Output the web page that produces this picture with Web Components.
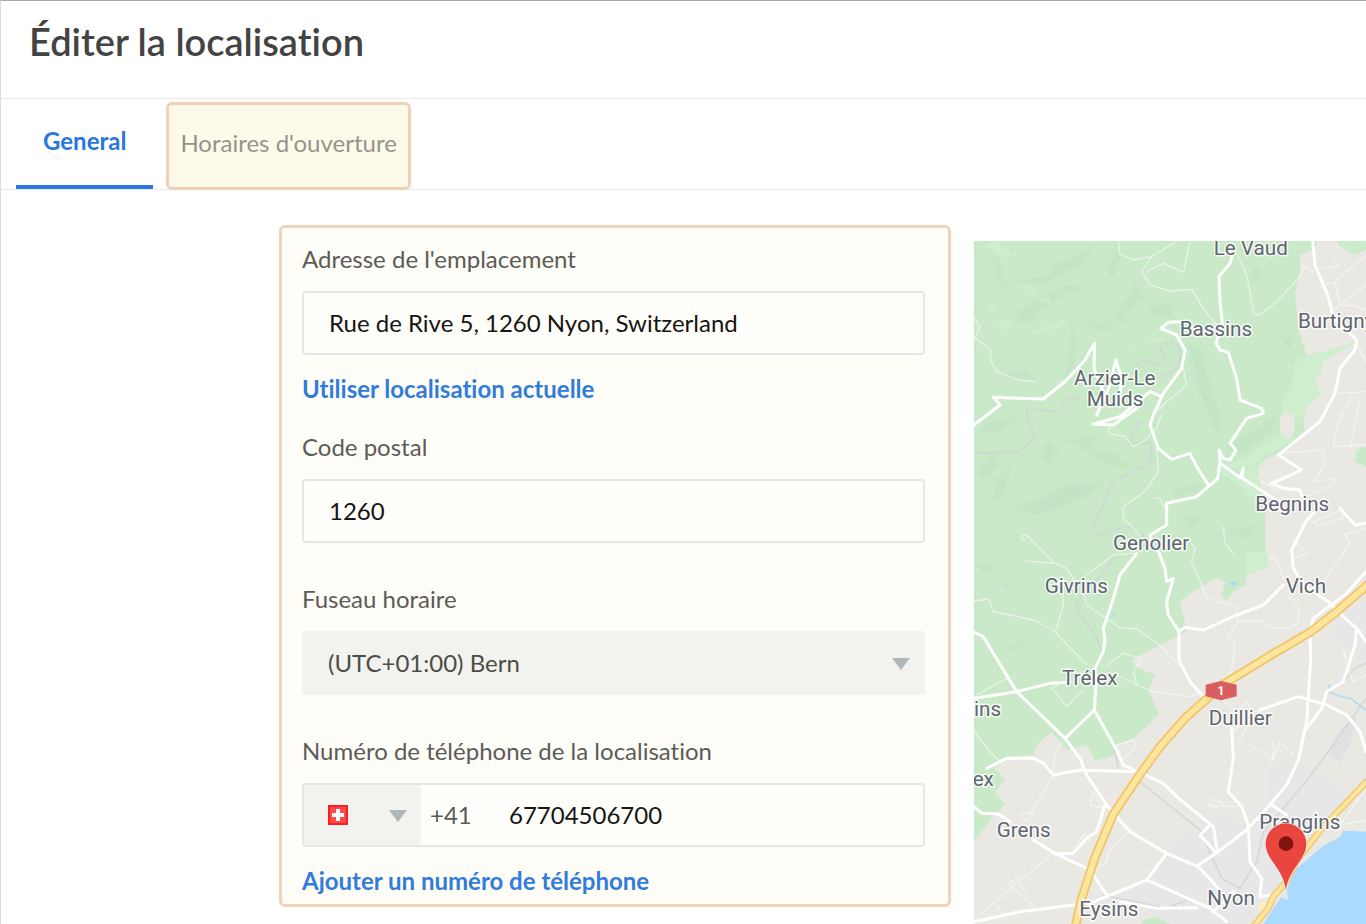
<!DOCTYPE html>
<html lang="fr">
<head>
<meta charset="utf-8">
<meta name="viewport" content="width=device-width, initial-scale=1">
<title>Éditer la localisation</title>
<style>
  body { margin: 0; background: #fff; font-family: Lato, "Liberation Sans", sans-serif; font-size: 24px; line-height: 32px; font-variant-ligatures: none; color: #575752; }
</style>
</head>
<body>
<location-editor>
  <page-header slot="header">Éditer la localisation</page-header>
  <tab-bar slot="tabs">
    <tab-item active>General</tab-item>
    <tab-item highlight>Horaires d'ouverture</tab-item>
  </tab-bar>
  <location-form slot="form">
    <text-field label="Adresse de l'emplacement" value="Rue de Rive 5, 1260 Nyon, Switzerland"></text-field>
    <action-link>Utiliser localisation actuelle</action-link>
    <text-field label="Code postal" value="1260"></text-field>
    <select-field label="Fuseau horaire" value="(UTC+01:00) Bern"></select-field>
    <phone-field label="Numéro de téléphone de la localisation" prefix="+41" value="67704506700"></phone-field>
    <action-link>Ajouter un numéro de téléphone</action-link>
  </location-form>
  <location-map slot="map"></location-map>
</location-editor>

<script>
const define = (name, build) => customElements.define(name, class extends HTMLElement {
  constructor() {
    super();
    this.attachShadow({ mode: 'open' }).innerHTML = build(this);
  }
});

const fieldCss = `
  :host { display: block; }
  * { box-sizing: border-box; }
  label { display: block; margin-bottom: 16px; color: #5c5b57; }
  input, select { display: block; width: 100%; height: 64px; margin: 0; font: inherit; font-variant-ligatures: none; border-radius: 4px; outline: none; }
  input { border: 2px solid #e3e8e6; background: #fffefa; color: #151513; padding: 0 25px 2px; }
  select { appearance: none; border: 0; background: #f2f3ef; color: #4c4d47; padding: 0 56px 0 26px; }
  .box { display: grid; align-items: center; }
  .box > * { grid-area: 1 / 1; }
  .arrow { justify-self: end; width: 18px; height: 12px; margin-top: 2px; fill: #b0b7b9; pointer-events: none; }`;
const arrow = `<svg class="arrow" viewBox="0 0 18 12" aria-hidden="true"><path d="M0 0h18L9 12z"/></svg>`;

define('location-editor', () => `
  <style>
    :host { display: flex; flex-direction: column; min-height: 100vh; box-sizing: border-box; border-top: 1px solid #a9a9a9; border-left: 1px solid #dcdcdc; }
    main { flex: 1; display: grid; grid-template-columns: minmax(0, 12fr) minmax(0, 7fr); column-gap: 23px; padding: 35px 0 0 278px; }
    slot[name=form]::slotted(*) { align-self: start; margin-bottom: 17px; }
    slot[name=map]::slotted(*) { margin-top: 16px; }
  </style>
  <slot name="header"></slot>
  <slot name="tabs"></slot>
  <main><slot name="form"></slot><slot name="map"></slot></main>`);

define('page-header', () => `
  <style>
    :host { display: block; padding: 16px 28px 33px; border-bottom: 1px solid #ebebeb; }
    h1 { margin: 0; font-size: 38px; line-height: 48px; font-weight: 600; color: #434343; }
  </style>
  <h1><slot></slot></h1>`);

define('tab-bar', () => `
  <style>
    :host { display: flex; gap: 13px; height: 90px; padding-left: 15px; border-bottom: 1px solid #ebebeb; }
  </style>
  <slot></slot>`);

define('tab-item', el => `
  <style>
    :host { display: flex; }
    :host([highlight]) { position: relative; z-index: 1; margin: 3px 0 -1px; }
    button { font: inherit; border: 0; background: none; padding: 0 27px 2px; cursor: pointer; color: #96948a; }
    :host([active]) button { color: #2777dd; font-weight: 700; border-bottom: 4px solid #2777dd; }
    :host([highlight]) button { padding: 0 11px 6px; background: #fefaea; border: 3px solid #f0d1b7; border-radius: 6px; }
  </style>
  <button type="button" role="tab" aria-selected="${el.hasAttribute('active')}"><slot></slot></button>`);

define('location-form', () => `
  <style>
    :host { display: block; border: 3px solid #f1d3b9; border-radius: 6px; background: #fffdf8; padding: 15px 23px 7px 20px; }
    form { display: flex; flex-direction: column; }
    ::slotted(text-field:not(:first-child)), ::slotted(select-field) { margin-bottom: 40px; }
    ::slotted(action-link) { margin-top: 18px; }
    ::slotted(action-link:not(:last-child)) { margin-bottom: 26px; }
  </style>
  <form><slot></slot></form>`);

define('action-link', () => `
  <style>
    :host { display: block; }
    a { color: #317cd9; font-weight: 700; text-decoration: none; }
  </style>
  <a href="#"><slot></slot></a>`);

define('text-field', el => `
  <style>${fieldCss}</style>
  <label for="field">${el.getAttribute('label')}</label>
  <input id="field" type="text" value="${el.getAttribute('value')}">`);

define('select-field', el => `
  <style>${fieldCss} .arrow { margin-right: 15px; }</style>
  <label for="field">${el.getAttribute('label')}</label>
  <div class="box">
    <select id="field"><option>${el.getAttribute('value')}</option></select>
    ${arrow}
  </div>`);

define('phone-field', el => `
  <style>${fieldCss}
    .phone { display: flex; align-items: center; height: 64px; border: 2px solid #e3e8e6; border-radius: 4px; background: #fffefa; }
    .country { flex: none; width: 117px; }
    .country select { height: 60px; border-radius: 2px 4px 4px 2px; }
    .country .arrow { margin-right: 14px; }
    .flag { width: 20px; height: 20px; margin-left: 24px; pointer-events: none; }
    .prefix { flex: none; width: 80px; padding-left: 9px; color: #5c5b57; }
    .phone input { flex: 1; min-width: 0; height: 60px; border: 0; padding: 0 8px 2px; background: none; }
  </style>
  <label for="field">${el.getAttribute('label')}</label>
  <div class="phone">
    <div class="box country">
      <select aria-label="Pays"><option value="CH"></option></select>
      <svg class="flag" viewBox="0 0 20 20" aria-hidden="true">
        <rect x="1" y="1" width="18" height="18" fill="#ff4a4e" stroke="#fb1d22" stroke-width="2"/>
        <path d="M8 4h4v4h4v4h-4v4H8v-4H4V8h4z" fill="#fff"/>
      </svg>
      ${arrow}
    </div>
    <span class="prefix">${el.getAttribute('prefix')}</span>
    <input id="field" type="tel" value="${el.getAttribute('value')}">
  </div>`);

define('location-map', () => `
  <style>
    :host { display: grid; overflow: hidden; background: #eae8e3; }
    svg { display: block; width: 100%; height: 100%; }
    .land { fill: #c9e9c9; }
    .light { fill: #ceeecd; }
    .shade { fill: #bbdfbd; opacity: .4; filter: blur(5px); }
    .glow { fill: #d2efcb; opacity: .7; }
    .town { fill: #e7e7e8; }
    .lake { fill: #aadaff; }
    .minor, .road, .rail, .case, .way { fill: none; stroke-linejoin: round; stroke-linecap: round; }
    .minor { stroke: #f8faf6; stroke-width: 4; opacity: .65; }
    .road { stroke: #fff; stroke-width: 9; }
    .rail { stroke: #d0d5d7; stroke-width: 5; opacity: .85; }
    .case { stroke: #f1c66b; }
    .way { stroke: #ffe59d; }
    text { font: 62px Roboto, sans-serif; fill: #60656f; stroke: #fff; stroke-opacity: .8; stroke-width: 9; stroke-linejoin: round; paint-order: stroke; }
    .shield { font: 700 36px Roboto, sans-serif; fill: #fff; stroke: none; text-anchor: middle; }
  </style>
  <svg viewBox="12 18 1176 2049" preserveAspectRatio="xMinYMin slice" role="img" aria-label="Carte de Nyon">
    <!-- forest -->
    <path class="land" d="M0 0H1045L1035 42 990 58 992 110 975 170 985 280 1000 330 1010 360 1060 350 1160 322 1090 350 1055 382 1055 410 1035 430 1050 482 1010 512 1000 560 1003 590 985 600 975 630 940 650 890 670 862 700 868 740 884 780 888 950 898 995 830 1020 825 1050 790 1070 770 1098 755 1080 765 1040 740 1030 660 1075 630 1100 640 1145 650 1190 620 1205 530 1250 485 1275 500 1297 555 1320 535 1365 550 1400 567 1435 530 1475 490 1510 440 1530 432 1560 375 1578 360 1545 350 1530 290 1545 245 1490 200 1530 190 1560 120 1567 75 1600 105 1632 75 1672 105 1707 60 1757 12 1817H0z"/>
    <path class="land" d="M1075 0H1188V45L1150 60zM1188 635 1160 645 1155 680 1188 695zM515 2067 520 2055 560 2047 620 2060 660 2067z"/>
    <path class="light" d="M1160 322 1060 350 1010 360 975 385 965 440 940 500 935 545 1000 550 1010 512 1050 482 1035 430 1055 410 1055 382zM930 640 860 680 800 730 760 700 850 650 940 590 980 610zM740 705 820 760 880 830 887 780 862 740 860 690zM830 950 888 950 898 995 825 1020z"/>
    <path d="M930 550 945 534 970 537 976 570 968 600 950 612 930 590z" fill="#eae8e3"/>
    <path d="M1188 0H1100L1105 30 1150 58 1188 40z" fill="#c9edc9"/>
    <!-- relief -->
    <g class="shade">
      <path d="M70 60 90 90 110 160 80 130zM140 140 235 120 250 90 330 60 375 30 340 80 240 140 200 150zM255 160 315 148 325 168 280 176zM150 225 250 170 270 185 210 220 190 260 130 260zM410 110 440 40 455 60 430 130zM440 240 500 150 530 190 480 220 450 270zM540 210 620 205 600 250 545 245zM350 260 430 265 400 290zM285 420 310 250 320 340 300 440zM650 320 690 340 730 480 760 570 740 590 690 480z"/>
      <path d="M210 660 235 620 260 645 235 690zM75 740 120 700 105 780 75 800zM140 810 220 790 300 740 400 750 320 800 200 840zM20 710 70 650 90 690 40 730zM340 640 420 650 480 700 420 690zM610 765 700 745 680 770 620 785zM110 1250 165 1210 150 1235zM760 640 860 580 930 540 900 590 820 650zM940 320 965 300 960 350zM290 620 380 600 360 640zM20 590 60 560 140 545 90 590z"/>
      <path d="M15 980 80 1000 40 1015zM640 840 700 850 660 880zM750 890 860 870 830 910zM110 420 170 400 200 440 130 430zM830 130 860 90 870 140z"/>
    </g>
    <path class="glow" d="M45 30 80 18 125 60 100 70zM160 150 200 155 190 175zM205 195 245 185 240 205zM185 290 290 250 270 275 190 300zM75 270 125 250 110 285zM470 335 500 325 490 345zM520 315 595 305 560 325zM985 400 1030 380 1020 410zM50 225 75 210 70 240z"/>
    <!-- built-up areas -->
    <path class="town" d="M1188 1100 1110 1130 1080 1180 1120 1230 1188 1290zM900 1590 960 1580 1100 1640 1130 1680 1090 1760 1000 1850 950 1950 890 2067H600L500 2005 440 1990 360 2020 540 1940 580 1855 670 1780 740 1740 830 1760 900 1700z"/>
    <path fill="#e1e1e3" d="M1100 1495 1160 1440 1140 1530 1110 1580 1075 1560z"/>
    <path class="lake" d="M1188 1790 1120 1787 1112 1805 1060 1832 1010 1875 975 1905 950 1965 955 1996 935 1987 915 2012 880 2067H1188z"/>
    <path fill="#a5d9fb" d="M780 1040h20v9h-20zM102 1047l10 5-5 8zM424 1134l9 5-5 8zM82 1062l6 2-3 5z"/>
    <path fill="none" stroke="#b2dbf4" stroke-width="5" d="M1078 1350V1372L1115 1385 1145 1392 1188 1425"/>
    <path d="M862 2005 885 2000 890 2022 865 2027z" fill="#fdeec0"/>
    <!-- railways -->
    <path class="rail" d="M635 355C620 310 570 320 572 345L588 370 560 388 520 375 500 390M635 355 620 400 570 430M330 490 290 492 265 530 210 525 170 522 172 560 197 605 150 650 20 655M510 560 475 625 540 625 545 680 430 740 370 870 385 905 470 873 520 900M440 960 385 1030 340 1075 318 1110 330 1145 370 1190 398 1250"/>
    <path class="rail" d="M505 1637 690 1785 755 1930 810 1960 860 1880 880 1790 1000 1650 1090 1530 1188 1390M430 1530 445 1597M650 1995 590 2020 400 1980M1110 1350 1155 1300 1188 1285"/>
    <!-- lanes -->
    <path class="minor" d="M447 18V55L490 75 545 65 515 110 540 150 600 168 665 163 700 220 740 270M545 65 620 18M530 110 580 85 640 112 660 18M805 65 830 120 850 230 865 243 920 200 990 125 1000 95 1030 110M12 250 30 275 15 310 65 345 60 370 80 410 145 435 200 440M1050 155 1095 140 1110 210 1188 150M1085 230 1110 210 1150 212 1188 225M1090 70 1105 95 1060 100M1095 140 1188 60M1100 475 1188 470M1145 480 1105 560 1090 635 1188 630M1160 330 1188 380M1170 490 1140 640"/>
    <path class="minor" d="M640 400 650 450 590 500 550 540M420 570 415 595 465 605 490 635 520 620 560 580 575 540M560 640 565 710 525 770 460 815 460 850 510 900M555 790 570 790 590 830M170 900C150 895 150 920 165 915M170 900 255 985 290 1000 320 1045M168 978 255 985M350 1020 430 960 490 955M665 925 675 940 665 980 700 1060 710 1090 800 1115 805 1160 775 1200 795 1225 785 1310 760 1330M925 655 1060 645 1065 690 1030 740 1100 730 1090 750 1000 790M862 730 930 770M1030 860 1115 825 1120 850 1045 872zM1188 880 1125 900 1140 925 1060 1040 1010 1075M895 975 915 965 940 1030M980 925 1012 955 970 970M760 875 765 925 790 955"/>
    <path class="minor" d="M12 1098 55 1092 70 1130 190 1155 250 1185 350 1290M280 1045V1110L257 1187M340 1070 350 1110 450 1178 500 1182 570 1230 625 1290M410 1290 460 1255 515 1270 490 1310 500 1350 550 1370 660 1385 690 1375M440 1320 500 1350M245 1360 290 1415 340 1365M245 1360 270 1345M20 1380 110 1330M12 1490 60 1550 100 1590M250 1615 255 1560 275 1520M800 1160 870 1157 910 1180 960 1180 985 1163 985 1110 950 1080M1120 1240 1130 1290 1150 1340 1188 1320M790 1495 840 1430 870 1430M765 1400 800 1430 830 1400 850 1430 810 1515 800 1510M900 1590 930 1520 970 1560M440 1530 490 1515 498 1540 460 1570"/>
    <path class="minor" d="M250 1620 170 1760 150 1740 190 1730 175 1750M370 1670 400 1720 360 1710zM210 1830 255 1855M300 1855 345 1795 360 1820M715 1712 740 1690 765 1715zM765 1715 810 1712M250 1855 120 1960 20 2050M120 1945 140 1930 170 1975M75 2005 110 2050M120 1955 200 2020M470 1795 415 1850 410 1880 370 1915M840 1530 910 1575 910 1520M1188 1755 1110 1770 1188 1660"/>
    <!-- roads -->
    <g class="road">
      <path d="M12 570 90 510 70 487 140 490 220 492 290 435 345 375 374 325 372 400 400 470M437 375 420 450 380 540 M437 375 455 430 450 480M575 485 540 470 450 545 370 567 430 570 500 520M630 260 595 262 572 280 620 300 645 345 635 400 580 475 550 540 540 570 565 640 605 673 660 655 680 695 715 750"/>
      <path d="M790 50 780 85 747 125 750 200 757 260 738 325 750 345 775 352 800 430 810 495 875 520 880 535 830 550 780 625 798 645 780 675 760 670 747 645 750 680 743 730 715 755 680 785 590 805 590 870 540 900 545 940M750 685 810 728 820 700 815 728 925 800M1028 18 1035 90 1075 185 1090 250 1160 315 1155 345 1110 400 1095 475 1050 560 925 660 995 705 905 745 940 760 990 765 1000 790"/>
      <path d="M500 955 450 1020 430 1090 400 1180 405 1215 400 1250 375 1300 378 1350 373 1425 285 1510M565 950 585 1000 590 1040 610 1030 590 1100 595 1140 627 1190V1275L660 1340 700 1385M625 1190 645 1177 700 1185 800 1140 880 1110 940 1050M1030 835 1010 855 965 945 970 1000 1000 1050 1075 1100M1110 820 1155 870 1188 865M1188 1010 1130 1075 1030 1150 1020 1190 1022 1275 1010 1460 985 1575 950 1650 895 1715 830 1785 745 1850 685 1890"/>
      <path d="M12 1192 40 1205 140 1370 285 1510 330 1570 350 1620 410 1710 480 1790 590 1855 685 1895 745 1960M12 1390 140 1370 240 1345 300 1342M373 1425 440 1545 460 1590 580 1645 620 1685 730 1775 742 1848M1075 1100 1120 1145 1160 1180 1188 1220M1160 1180 1155 1230 1120 1340 1070 1370 1055 1420 1010 1480M870 1425 985 1385 1070 1410 1130 1440 1170 1490 1188 1550"/>
      <path d="M50 1600 110 1570 190 1570 220 1585 250 1620 330 1605 490 1610M12 1715 35 1735 85 1737 120 1760M190 1815 255 1855 360 1905 410 1980M255 1857 310 1855 350 1810 380 1790 405 1710M12 2060 150 2030 310 2010 360 2005 530 1935 590 1855M450 2000 560 2020 680 2018M530 1935 720 2020 770 2060M785 1480 790 1570 775 1670 815 1715 835 1770 840 1880 875 1930 870 1985 905 1980M905 1710 950 1740M790 1970 730 2030M715 1775 690 1800 735 1850"/>
    </g>
    <!-- trunk roads -->
    <g>
      <path class="case" stroke-width="28" d="M1195 1048 1100 1130 1020 1192 900 1262 760 1348 650 1445 570 1535 510 1618 430 1737 375 1867 335 1990 315 2080"/>
      <path class="way" stroke-width="17" d="M1195 1048 1100 1130 1020 1192 900 1262 760 1348 650 1445 570 1535 510 1618 430 1737 375 1867 335 1990 315 2080"/>
      <path class="case" stroke-width="20" d="M1195 1635 1060 1775 985 1870 945 1945 910 1985 895 2020 850 2075"/>
      <path class="way" stroke-width="12" d="M1195 1635 1060 1775 985 1870 945 1945 910 1985 895 2020 850 2075"/>
    </g>
    <path fill="#d95d61" d="M707 1349 753 1338 800 1349V1384L753 1396 707 1384z"/>
    <text class="shield" x="753" y="1380">1</text>
    <!-- place names -->
    <text x="731" y="60">Le Vaud</text>
    <text x="629" y="304">Bassins</text>
    <text x="984" y="278">Burtigny</text>
    <text x="312" y="451">Arzier-Le</text>
    <text x="350" y="514">Muids</text>
    <text x="429" y="946">Genolier</text>
    <text x="856" y="827">Begnins</text>
    <text x="224" y="1074">Givrins</text>
    <text x="947" y="1074">Vich</text>
    <text x="276" y="1350">Trélex</text>
    <text x="12" y="1442">ins</text>
    <text x="716" y="1471">Duillier</text>
    <text x="8" y="1653">ex</text>
    <text x="80" y="1806">Grens</text>
    <text x="328" y="2044">Eysins</text>
    <text x="712" y="2009">Nyon</text>
    <text x="868" y="1782">Prangins</text>
    <!-- marker -->
    <path d="M948 1966C940 1900 887 1875 887 1826A61 61 0 0 1 1009 1826C1009 1875 956 1900 948 1966z" fill="#ea4640" stroke="#fbe9e3" stroke-width="4" paint-order="stroke"/>
    <circle cx="948" cy="1826" r="22" fill="#811411"/>
  </svg>`);
</script>
</body>
</html>
